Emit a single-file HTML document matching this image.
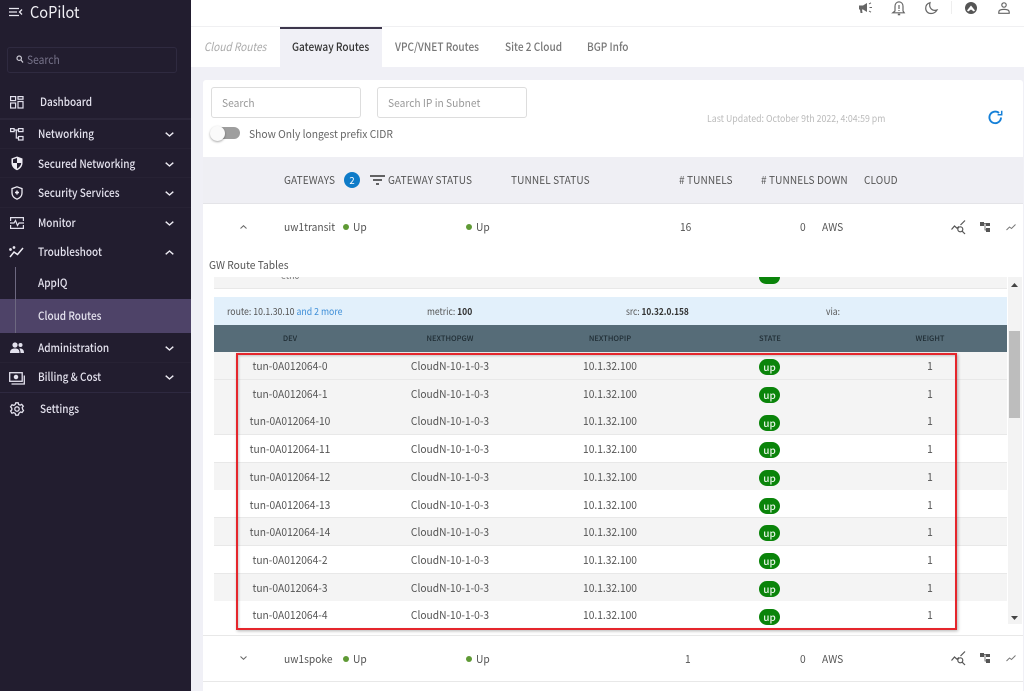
<!DOCTYPE html>
<html><head><meta charset="utf-8"><style>
html,body{margin:0;padding:0;width:1024px;height:691px;overflow:hidden;background:#f0f0f6}
*{box-sizing:border-box}
body{position:relative;font-family:"Noto Sans CJK SC","Liberation Sans",sans-serif;color:#555;font-size:11.5px}
.a{position:absolute}
.t{position:absolute;white-space:nowrap;line-height:16px;height:16px;transform-origin:0 50%;transform:scaleX(.93)}
.c{transform-origin:50% 50%;transform:translateX(-50%) scaleX(.93)}
.s{color:#e4e2ee;font-size:11.5px;font-weight:500;transform:scaleX(.87)}
.tb{font-size:11.5px;transform:scaleX(.875)}
.hd{color:#555;font-size:11px;letter-spacing:.1px;transform:scaleX(.915)}
.m{transform:scaleX(.9)}
.th{color:#1f2c33;font-size:7.5px;font-weight:500;top:331px;transform:translateX(-50%)}
.row{position:absolute;left:214px;width:793px;height:28px;border-bottom:1px solid #e8e8e8}
.g{background:#f4f4f4}.w{background:#fff}
.b{position:absolute;left:759px;width:21px;height:16px;border-radius:9px;background:#0a840a;color:#e8f5e8;font-size:10px;line-height:16px;text-align:center;font-weight:500}
.dot{position:absolute;width:6px;height:6px;border-radius:50%;background:#5f9a35}
svg{position:absolute;overflow:visible}
</style></head><body>
<!-- sidebar -->
<div class="a" style="left:0;top:0;width:191px;height:691px;background:#221d2f"></div>
<div class="a" style="left:0;top:299px;width:191px;height:34px;background:#4e4368"></div>
<div class="a" style="left:0;top:118px;width:191px;height:2px;background:#2b2639"></div>
<div class="a" style="left:0;top:148px;width:191px;height:1px;background:#272234"></div>
<div class="a" style="left:0;top:177px;width:191px;height:1px;background:#272234"></div>
<div class="a" style="left:0;top:207px;width:191px;height:1px;background:#272234"></div>
<div class="a" style="left:0;top:362px;width:191px;height:1px;background:#272234"></div>
<div class="a" style="left:0;top:392px;width:191px;height:1px;background:#2e2940"></div>
<div class="a" style="left:15px;top:267px;width:1px;height:66px;background:#6d6880"></div>
<svg style="left:9px;top:7px" width="14" height="10" fill="none" stroke="#e8e6ef" stroke-width="1.3"><path d="M0 1.5H10M0 5H8M0 8.5H10M13 2.5L10.5 5L13 7.5"/></svg>
<div class="t" style="left:30px;top:1px;height:20px;line-height:20px;color:#f1f0f5;font-size:16px;transform:scaleX(.91)">CoPilot</div>
<div class="a" style="left:7px;top:47px;width:170px;height:26px;border:1px solid #2f2a40;border-radius:3px"></div>
<svg style="left:16px;top:55px" width="8" height="9" fill="none" stroke="#cfcdd8" stroke-width="1.2"><circle cx="3.2" cy="3.2" r="2.2"/><path d="M5 5L7 7.5"/></svg>
<div class="t" style="left:27px;top:52px;color:#77738a;font-size:11.5px;transform:scaleX(.89)">Search</div>

<svg style="left:10px;top:96px" width="14" height="13" fill="none" stroke="#e4e2ee" stroke-width="1.2"><rect x=".6" y=".6" width="5" height="4"/><rect x="8" y=".6" width="5" height="2.6"/><rect x=".6" y="7" width="5" height="5"/><rect x="8" y="5.5" width="5" height="6.5"/></svg>
<div class="t s" style="left:40px;top:94px">Dashboard</div>

<svg style="left:10px;top:128px" width="14" height="13" fill="none" stroke="#e4e2ee" stroke-width="1.2"><rect x=".6" y=".6" width="3.5" height="3"/><rect x="8.5" y=".6" width="4.5" height="3"/><rect x="8.5" y="8.5" width="4.5" height="3.5"/><path d="M4 2H8.5M6.3 2V10H8.5"/></svg>
<div class="t s" style="left:38px;top:126px">Networking</div>
<svg style="left:11px;top:156px" width="12" height="15" fill="#eeecf4"><path d="M6 .5L11.5 2.5V7C11.5 10.5 9 13 6 14.3C3 13 .5 10.5 .5 7V2.5Z"/><path d="M6 2V7H2V3.4ZM6 7H10.2C10 9.6 8 11.6 6 12.7Z" fill="#221d2f"/></svg>
<div class="t s" style="left:38px;top:156px">Secured Networking</div>
<svg style="left:11px;top:186px" width="12" height="14" fill="none" stroke="#eeecf4" stroke-width="1.3"><path d="M6 .8L11 2.6V7C11 10 9 12 6 13.2C3 12 1 10 1 7V2.6Z"/><path d="M6 4.5V8.5M4 6.5H8" stroke-width="1.5"/></svg>
<div class="t s" style="left:38px;top:185px">Security Services</div>
<svg style="left:10px;top:217px" width="14" height="12" fill="none" stroke="#e4e2ee" stroke-width="1.2"><path d="M.6 4V.6H13.4V4M.6 8V11.4H13.4V8M0 6H4L5.5 3.5L7.5 8.5L9 6H14"/></svg>
<div class="t s" style="left:38px;top:215px">Monitor</div>
<svg style="left:9px;top:246px" width="16" height="12" fill="none" stroke="#eeecf4" stroke-width="1.5"><path d="M1 11L5 6L8.5 8.5L14 2"/><circle cx="1.5" cy="3.5" r=".6"/><circle cx="5" cy="1.5" r=".6"/></svg>
<div class="t s" style="left:38px;top:244px">Troubleshoot</div>
<div class="t s" style="left:38px;top:275px">AppIQ</div>
<div class="t s" style="left:38px;top:308px">Cloud Routes</div>
<svg style="left:10px;top:342px" width="14" height="12" fill="#e4e2ee"><circle cx="5" cy="3" r="2.6"/><circle cx="10.5" cy="3" r="2"/><path d="M0 11C0 7.5 2 6.5 5 6.5S9.5 7.5 9.5 11ZM10.5 11C10.5 9 10 7.5 9.3 6.6C12 6.3 14 7.5 14 11Z"/></svg>
<div class="t s" style="left:38px;top:340px">Administration</div>
<svg style="left:9px;top:372px" width="16" height="13" fill="none" stroke="#e4e2ee" stroke-width="1.3"><rect x=".7" y=".7" width="12.5" height="8.6"/><circle cx="7" cy="5" r="1.6" fill="#e4e2ee"/><path d="M2.5 12H15.3V3.5"/></svg>
<div class="t s" style="left:38px;top:369px">Billing &amp; Cost</div>
<svg style="left:10px;top:402px" width="14" height="14" fill="none" stroke="#e4e2ee" stroke-width="1.3"><circle cx="7" cy="7" r="2.2"/><path d="M5.8 .8H8.2L8.6 2.5L10.2 3.2L11.7 2.3L13.3 4.2L12.2 5.5L12.6 7.2L13.5 8.5L12.1 10.5L10.5 10L9 11.3L8.2 13.2H5.8L5.2 11.4L3.6 10.6L1.9 11.2L.6 9L1.8 7.8V6.2L.6 4.8L2 2.8L3.8 3.4L5.2 2.5Z"/></svg>
<div class="t s" style="left:40px;top:401px">Settings</div>
<svg style="left:165px;top:132px" width="9" height="5" fill="none" stroke="#eeecf4" stroke-width="1.4"><path d="M.7.7L4.5 4L8.3.7"/></svg>
<svg style="left:165px;top:162px" width="9" height="5" fill="none" stroke="#eeecf4" stroke-width="1.4"><path d="M.7.7L4.5 4L8.3.7"/></svg>
<svg style="left:165px;top:191px" width="9" height="5" fill="none" stroke="#eeecf4" stroke-width="1.4"><path d="M.7.7L4.5 4L8.3.7"/></svg>
<svg style="left:165px;top:221px" width="9" height="5" fill="none" stroke="#eeecf4" stroke-width="1.4"><path d="M.7.7L4.5 4L8.3.7"/></svg>
<svg style="left:165px;top:250px" width="9" height="5" fill="none" stroke="#eeecf4" stroke-width="1.4"><path d="M.7 4.3L4.5 1L8.3 4.3"/></svg>
<svg style="left:165px;top:346px" width="9" height="5" fill="none" stroke="#eeecf4" stroke-width="1.4"><path d="M.7.7L4.5 4L8.3.7"/></svg>
<svg style="left:165px;top:375px" width="9" height="5" fill="none" stroke="#eeecf4" stroke-width="1.4"><path d="M.7.7L4.5 4L8.3.7"/></svg>

<!-- top -->
<div class="a" style="left:191px;top:0;width:833px;height:67px;background:#fff"></div>
<div class="a" style="left:191px;top:26px;width:833px;height:1px;background:#f0f0f2"></div>
<svg style="left:859px;top:2px" width="15" height="12" fill="#666"><path d="M0 3.5H4L8 1V10L4 7.5H3L3.5 11H1.5L1 7.5H0Z"/><path d="M10 2L12 .8M10.5 5.5H13M10 9L12 10.2" stroke="#666" fill="none"/></svg>
<svg style="left:892px;top:1px" width="14" height="15" fill="none" stroke="#666" stroke-width="1.2"><path d="M.8 11.8H12.2L11 10V5.5C11 3 9.5 1 7 .8C4.5 1 3 3 3 5.5V10Z"/><path d="M7 4V8M7 9V10" /><path d="M5.8 13.5H8.2" stroke-width="1.6"/></svg>
<svg style="left:925px;top:2px" width="13" height="12" fill="none" stroke="#666" stroke-width="1.2"><path d="M5 .7C3 1.3.7 3 .7 6.2C.7 9.3 3 11.5 6 11.5C9 11.5 11 9.8 12 8C7.5 9.5 3.5 6 5 .7Z"/></svg>
<div class="a" style="left:951px;top:1px;width:1px;height:13px;background:#eee"></div>
<div class="a" style="left:965px;top:2px;width:12px;height:12px;border-radius:50%;background:#555"></div>
<svg style="left:967px;top:5px" width="8" height="8" fill="#fff"><path d="M4 .5L8 5.5L6.8 6.5L4 4.5L1.2 6.5L0 5.5Z"/></svg>
<svg style="left:998px;top:2px" width="12" height="12" fill="none" stroke="#666" stroke-width="1.2"><circle cx="6" cy="3" r="2.2"/><path d="M.8 11.3V10C.8 8.3 3 7.4 6 7.4S11.2 8.3 11.2 10V11.3Z"/></svg>

<div class="t tb" style="left:204px;top:39px;font-style:italic;color:#aaa">Cloud Routes</div>
<div class="a" style="left:280px;top:27px;width:102px;height:40px;background:#f0f0f6;border-top:2px solid #3d374c"></div>
<div class="t tb" style="left:292px;top:39px;color:#333;font-weight:500">Gateway Routes</div>
<div class="t tb" style="left:395px;top:39px;color:#777;font-weight:500">VPC/VNET Routes</div>
<div class="t tb" style="left:505px;top:39px;color:#777;font-weight:500">Site 2 Cloud</div>
<div class="t tb" style="left:587px;top:39px;color:#777;font-weight:500">BGP Info</div>

<!-- card -->
<div class="a" style="left:203px;top:80px;width:820px;height:611px;background:#fff;border-radius:3px 3px 0 0"></div>
<div class="a" style="left:211px;top:87px;width:150px;height:31px;border:1px solid #ddd;border-radius:3px"></div>
<div class="t" style="left:222px;top:95px;color:#999;font-size:11px">Search</div>
<div class="a" style="left:377px;top:87px;width:150px;height:31px;border:1px solid #ddd;border-radius:3px"></div>
<div class="t" style="left:388px;top:95px;color:#999;font-size:11px">Search IP in Subnet</div>
<div class="a" style="left:215px;top:127px;width:25px;height:12px;border-radius:6px;background:#9e9e9e"></div>
<div class="a" style="left:210px;top:126px;width:15px;height:15px;border-radius:50%;background:#fafafa;box-shadow:0 1px 2px rgba(0,0,0,.35)"></div>
<div class="t" style="left:249px;top:126px;color:#666;font-size:11px;transform:scaleX(.935)">Show Only longest prefix CIDR</div>
<div class="t" style="left:707px;top:110px;color:#bbb;font-size:9.6px;transform:scaleX(.917)">Last Updated: October 9th 2022, 4:04:59 pm</div>
<svg style="left:988px;top:110px" width="15" height="15" fill="none" stroke="#1580d8" stroke-width="1.9"><path d="M13 7.5A5.8 5.8 0 1 1 11 3"/><path d="M13.7 .7V4.8H9.6" stroke-width="1.5"/></svg>

<div class="a" style="left:203px;top:157px;width:820px;height:47px;background:#efeff4;border-bottom:1px solid #e4e4e8"></div>
<div class="t hd" style="left:284px;top:172px">GATEWAYS</div>
<div class="a" style="left:344px;top:172px;width:16px;height:16px;border-radius:50%;background:#0e7bc8;color:#fff;font-size:9.5px;line-height:16px;text-align:center">2</div>
<svg style="left:370px;top:175px" width="15" height="11" fill="none" stroke="#333" stroke-width="1.5"><path d="M0 1H15M3 5H12M6 9H9"/></svg>
<div class="t hd" style="left:388px;top:172px">GATEWAY STATUS</div>
<div class="t hd" style="left:511px;top:172px">TUNNEL STATUS</div>
<div class="t hd" style="left:679px;top:172px"># TUNNELS</div>
<div class="t hd" style="left:761px;top:172px"># TUNNELS DOWN</div>
<div class="t hd" style="left:864px;top:172px">CLOUD</div>

<!-- gateway row 1 -->
<svg style="left:240px;top:225px" width="7" height="4" fill="none" stroke="#666" stroke-width="1"><path d="M.5 3.5L3.5 .7L6.5 3.5"/></svg>
<div class="t" style="left:284px;top:219px;font-size:11px;color:#555">uw1transit</div>
<div class="dot" style="left:343px;top:224px"></div>
<div class="t" style="left:353px;top:219px;font-size:11px">Up</div>
<div class="dot" style="left:466px;top:224px"></div>
<div class="t" style="left:476px;top:219px;font-size:11px">Up</div>
<div class="t" style="left:680px;top:219px;font-size:11px">16</div>
<div class="t" style="left:800px;top:219px;font-size:11px">0</div>
<div class="t" style="left:822px;top:219px;font-size:11px">AWS</div>
<svg style="left:951px;top:220px" width="16" height="15" fill="none" stroke="#555" stroke-width="1.2"><path d="M.5 9.5L3.5 6L6 8.2L8 6.5"/><path d="M9.5 5L14 .5"/><circle cx="9.3" cy="9.3" r="2.5"/><path d="M11.2 11.2L14 14"/></svg>
<svg style="left:980px;top:222px" width="10" height="10" fill="#555"><rect x="0" y="0" width="4" height="4"/><rect x="6" y="1" width="4" height="3"/><rect x="6" y="6" width="4" height="4"/><path d="M3 1.5H6M5 1.5V8H6" stroke="#555" fill="none" stroke-width=".8"/></svg>
<svg style="left:1006px;top:224px" width="10" height="7" fill="none" stroke="#777"><path d="M.5 6L3.5 3L5.5 4.5L9.5 .5"/></svg>

<div class="t" style="left:209px;top:257px;font-size:11px;color:#555">GW Route Tables</div>

<!-- inner table -->
<div class="a" style="left:214px;top:277px;width:793px;height:12px;background:#f4f4f4;border-bottom:1px solid #e8e8e8;overflow:hidden"></div>
<div class="t" style="left:281px;top:267px;font-size:9.5px;color:#777;clip-path:inset(10px 0 0 0)">eth0</div>
<div class="a" style="left:759px;top:277px;width:21px;height:7px;background:#0a840a;border-radius:0 0 9px 9px"></div>
<div class="a" style="left:214px;top:297px;width:793px;height:28px;background:#e2f0fb"></div>
<div class="t" style="left:227px;top:303px;font-size:9.5px;color:#555;transform:scaleX(.92)">route: 10.1.30.10 <span style="color:#3f8fd8">and 2 more</span></div>
<div class="t m" style="left:427px;top:303px;font-size:9.5px;color:#555">metric: <b style="color:#333;font-weight:700">100</b></div>
<div class="t" style="left:626px;top:303px;font-size:9.5px;color:#555;transform:scaleX(.875)">src: <b style="color:#333;font-weight:700">10.32.0.158</b></div>
<div class="t m" style="left:826px;top:303px;font-size:9.5px;color:#555">via:</div>
<div class="a" style="left:214px;top:325px;width:793px;height:27px;background:#566c78"></div>
<div class="t th" style="left:290px">DEV</div>
<div class="t th" style="left:450px">NEXTHOPGW</div>
<div class="t th" style="left:610px">NEXTHOPIP</div>
<div class="t th" style="left:770px">STATE</div>
<div class="t th" style="left:930px">WEIGHT</div>

<div class="row g" style="top:352px"></div>
<div class="row g" style="top:380px"></div>
<div class="row g" style="top:407px"></div>
<div class="row w" style="top:435px"></div>
<div class="row g" style="top:463px"></div>
<div class="row w" style="top:490px"></div>
<div class="row g" style="top:518px"></div>
<div class="row w" style="top:546px"></div>
<div class="row g" style="top:574px"></div>
<div class="row w" style="top:601px;border-bottom:0"></div>

<div class="t c" style="left:290px;top:358px;font-size:11px">tun-0A012064-0</div><div class="t c" style="left:450px;top:358px;font-size:11px">CloudN-10-1-0-3</div><div class="t c" style="left:610px;top:358px;font-size:11px">10.1.32.100</div><div class="b" style="top:359px">up</div><div class="t c" style="left:930px;top:358px;font-size:11px">1</div>
<div class="t c" style="left:290px;top:386px;font-size:11px">tun-0A012064-1</div><div class="t c" style="left:450px;top:386px;font-size:11px">CloudN-10-1-0-3</div><div class="t c" style="left:610px;top:386px;font-size:11px">10.1.32.100</div><div class="b" style="top:387px">up</div><div class="t c" style="left:930px;top:386px;font-size:11px">1</div>
<div class="t c" style="left:290px;top:413px;font-size:11px">tun-0A012064-10</div><div class="t c" style="left:450px;top:413px;font-size:11px">CloudN-10-1-0-3</div><div class="t c" style="left:610px;top:413px;font-size:11px">10.1.32.100</div><div class="b" style="top:415px">up</div><div class="t c" style="left:930px;top:413px;font-size:11px">1</div>
<div class="t c" style="left:290px;top:441px;font-size:11px">tun-0A012064-11</div><div class="t c" style="left:450px;top:441px;font-size:11px">CloudN-10-1-0-3</div><div class="t c" style="left:610px;top:441px;font-size:11px">10.1.32.100</div><div class="b" style="top:442px">up</div><div class="t c" style="left:930px;top:441px;font-size:11px">1</div>
<div class="t c" style="left:290px;top:469px;font-size:11px">tun-0A012064-12</div><div class="t c" style="left:450px;top:469px;font-size:11px">CloudN-10-1-0-3</div><div class="t c" style="left:610px;top:469px;font-size:11px">10.1.32.100</div><div class="b" style="top:470px">up</div><div class="t c" style="left:930px;top:469px;font-size:11px">1</div>
<div class="t c" style="left:290px;top:497px;font-size:11px">tun-0A012064-13</div><div class="t c" style="left:450px;top:497px;font-size:11px">CloudN-10-1-0-3</div><div class="t c" style="left:610px;top:497px;font-size:11px">10.1.32.100</div><div class="b" style="top:498px">up</div><div class="t c" style="left:930px;top:497px;font-size:11px">1</div>
<div class="t c" style="left:290px;top:524px;font-size:11px">tun-0A012064-14</div><div class="t c" style="left:450px;top:524px;font-size:11px">CloudN-10-1-0-3</div><div class="t c" style="left:610px;top:524px;font-size:11px">10.1.32.100</div><div class="b" style="top:525px">up</div><div class="t c" style="left:930px;top:524px;font-size:11px">1</div>
<div class="t c" style="left:290px;top:552px;font-size:11px">tun-0A012064-2</div><div class="t c" style="left:450px;top:552px;font-size:11px">CloudN-10-1-0-3</div><div class="t c" style="left:610px;top:552px;font-size:11px">10.1.32.100</div><div class="b" style="top:553px">up</div><div class="t c" style="left:930px;top:552px;font-size:11px">1</div>
<div class="t c" style="left:290px;top:580px;font-size:11px">tun-0A012064-3</div><div class="t c" style="left:450px;top:580px;font-size:11px">CloudN-10-1-0-3</div><div class="t c" style="left:610px;top:580px;font-size:11px">10.1.32.100</div><div class="b" style="top:581px">up</div><div class="t c" style="left:930px;top:580px;font-size:11px">1</div>
<div class="t c" style="left:290px;top:607px;font-size:11px">tun-0A012064-4</div><div class="t c" style="left:450px;top:607px;font-size:11px">CloudN-10-1-0-3</div><div class="t c" style="left:610px;top:607px;font-size:11px">10.1.32.100</div><div class="b" style="top:609px">up</div><div class="t c" style="left:930px;top:607px;font-size:11px">1</div>

<!-- scrollbar -->
<div class="a" style="left:1008px;top:277px;width:14px;height:347px;background:#f3f3f3"></div>
<div class="a" style="left:1009px;top:331px;width:11px;height:87px;background:#bdbdbd"></div>
<svg style="left:1011px;top:283px" width="7" height="4" fill="#444"><path d="M3.5 0L7 4H0Z"/></svg>
<svg style="left:1011px;top:616px" width="7" height="4" fill="#444"><path d="M0 0H7L3.5 4Z"/></svg>

<!-- red box -->
<div class="a" style="left:236px;top:353px;width:721px;height:277px;border:2px solid #e5262c;box-shadow:1px 1px 3px rgba(0,0,0,.3), inset 1px 1px 2px rgba(0,0,0,.2)"></div>

<div class="a" style="left:203px;top:635px;width:820px;height:1px;background:#e8e8e8"></div>
<svg style="left:240px;top:656px" width="7" height="4" fill="none" stroke="#666" stroke-width="1"><path d="M.5 .5L3.5 3.3L6.5 .5"/></svg>
<div class="t" style="left:284px;top:651px;font-size:11px">uw1spoke</div>
<div class="dot" style="left:343px;top:656px"></div>
<div class="t" style="left:353px;top:651px;font-size:11px">Up</div>
<div class="dot" style="left:466px;top:656px"></div>
<div class="t" style="left:476px;top:651px;font-size:11px">Up</div>
<div class="t" style="left:685px;top:651px;font-size:11px">1</div>
<div class="t" style="left:800px;top:651px;font-size:11px">0</div>
<div class="t" style="left:822px;top:651px;font-size:11px">AWS</div>
<svg style="left:951px;top:651px" width="16" height="15" fill="none" stroke="#555" stroke-width="1.2"><path d="M.5 9.5L3.5 6L6 8.2L8 6.5"/><path d="M9.5 5L14 .5"/><circle cx="9.3" cy="9.3" r="2.5"/><path d="M11.2 11.2L14 14"/></svg>
<svg style="left:980px;top:653px" width="10" height="10" fill="#555"><rect x="0" y="0" width="4" height="4"/><rect x="6" y="1" width="4" height="3"/><rect x="6" y="6" width="4" height="4"/><path d="M3 1.5H6M5 1.5V8H6" stroke="#555" fill="none" stroke-width=".8"/></svg>
<svg style="left:1006px;top:655px" width="10" height="7" fill="none" stroke="#777"><path d="M.5 6L3.5 3L5.5 4.5L9.5 .5"/></svg>
<div class="a" style="left:203px;top:681px;width:820px;height:1px;background:#e8e8e8"></div>
</body></html>
